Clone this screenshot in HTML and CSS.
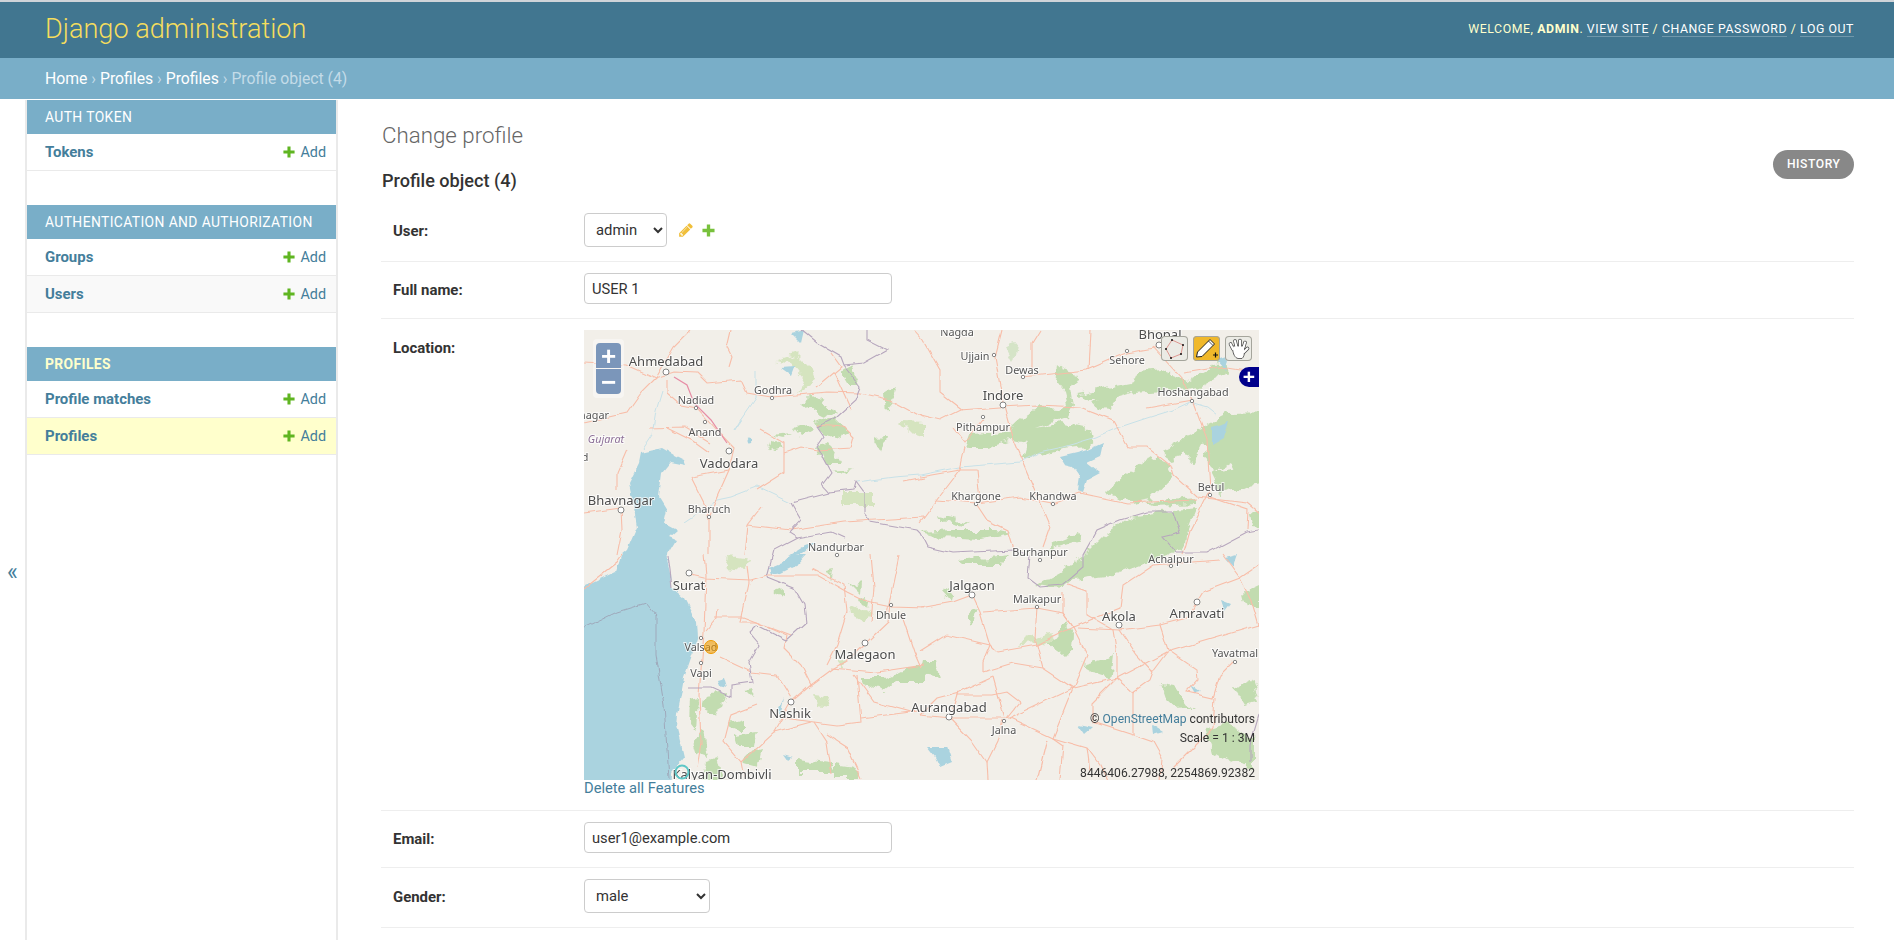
FILE: index.html
```html
<!DOCTYPE html>
<html lang="en">
<head>
    <meta charset="UTF-8">
    <title>Change profile | Django site admin</title>
    <link rel="stylesheet" href="styles.css">
</head>
<body>
    <svg class="defs" width="0" height="0">
        <symbol id="plus" viewBox="0 0 14 14"><path d="M5.2 0.5h3.6v4.7h4.7v3.6h-4.7v4.7h-3.6v-4.7h-4.7v-3.6h4.7z"/></symbol>
        <symbol id="pencil" viewBox="0 0 1792 1792"><path d="M491 1536l91-91-235-235-91 91v107h128v128h107zm523-928q0-22-22-22-10 0-17 7l-542 542q-7 7-7 17 0 22 22 22 10 0 17-7l542-542q7-7 7-17zm-54-192l416 416-832 832h-416v-416zm683 96q0 53-37 90l-166 166-416-416 166-165q36-38 90-38 53 0 91 38l235 234q37 39 37 91z"/></symbol>
    </svg>

    <header class="site-header">
        <div class="site-name">Django administration</div>
        <div class="user-tools">
            Welcome, <strong>admin</strong>.
            <a href="#">View site</a> /
            <a href="#">Change password</a> /
            <a href="#">Log out</a>
        </div>
    </header>
    <nav class="breadcrumbs">
        <a href="#">Home</a> <span class="sep">›</span>
        <a href="#">Profiles</a> <span class="sep">›</span>
        <a href="#">Profiles</a> <span class="sep">›</span>
        Profile object (4)
    </nav>

    <div class="main">
        <button class="nav-toggle">«</button>
        <aside class="sidebar">
            <section class="app">
                <h3 class="app-caption">Auth Token</h3>
                <div class="app-row">
                    <a class="model" href="#">Tokens</a>
                    <a class="add-link" href="#"><svg class="icon-add"><use href="#plus"/></svg>Add</a>
                </div>
            </section>
            <section class="app">
                <h3 class="app-caption">Authentication and Authorization</h3>
                <div class="app-row">
                    <a class="model" href="#">Groups</a>
                    <a class="add-link" href="#"><svg class="icon-add"><use href="#plus"/></svg>Add</a>
                </div>
                <div class="app-row alt">
                    <a class="model" href="#">Users</a>
                    <a class="add-link" href="#"><svg class="icon-add"><use href="#plus"/></svg>Add</a>
                </div>
            </section>
            <section class="app">
                <h3 class="app-caption current">Profiles</h3>
                <div class="app-row">
                    <a class="model" href="#">Profile matches</a>
                    <a class="add-link" href="#"><svg class="icon-add"><use href="#plus"/></svg>Add</a>
                </div>
                <div class="app-row selected">
                    <a class="model" href="#">Profiles</a>
                    <a class="add-link" href="#"><svg class="icon-add"><use href="#plus"/></svg>Add</a>
                </div>
            </section>
        </aside>

        <main class="content">
            <div class="content-head">
                <div>
                    <h1>Change profile</h1>
                    <h2>Profile object (4)</h2>
                </div>
                <a class="history" href="#">History</a>
            </div>

            <div class="form-row">
                <label>User:</label>
                <select class="field-select user"><option>admin</option></select>
                <a class="related" href="#"><svg class="icon-edit"><use href="#pencil"/></svg></a>
                <a class="related" href="#"><svg class="icon-related-add"><use href="#plus"/></svg></a>
            </div>
            <div class="form-row">
                <label>Full name:</label>
                <input class="field-text" type="text" value="USER 1">
            </div>
            <div class="form-row top">
                <label class="label-top">Location:</label>
                <div>
                    <div class="map">
                        <svg class="map-tiles" viewBox="0 0 675 450" width="675" height="450">
                            <defs>
                                <filter id="rough-land" filterUnits="userSpaceOnUse" x="-20" y="-20" width="715" height="490" color-interpolation-filters="sRGB">
                                    <feTurbulence type="fractalNoise" baseFrequency="0.08" numOctaves="3" seed="4"/>
                                    <feDisplacementMap in="SourceGraphic" scale="12" xChannelSelector="R" yChannelSelector="G"/>
                                    <feGaussianBlur stdDeviation="0.6"/>
                                </filter>
                                <filter id="rough-coast" filterUnits="userSpaceOnUse" x="-20" y="-20" width="715" height="490" color-interpolation-filters="sRGB">
                                    <feTurbulence type="fractalNoise" baseFrequency="0.1" numOctaves="2" seed="9"/>
                                    <feDisplacementMap in="SourceGraphic" scale="5" xChannelSelector="R" yChannelSelector="G"/>
                                    <feGaussianBlur stdDeviation="0.35"/>
                                </filter>
                                <filter id="rough-road" filterUnits="userSpaceOnUse" x="-20" y="-20" width="715" height="490" color-interpolation-filters="sRGB">
                                    <feTurbulence type="fractalNoise" baseFrequency="0.06" numOctaves="2" seed="2"/>
                                    <feDisplacementMap in="SourceGraphic" scale="5" xChannelSelector="R" yChannelSelector="G"/>
                                    <feGaussianBlur stdDeviation="0.3"/>
                                </filter>
                            </defs>
                            <rect width="675" height="450" fill="#f2efe9"/>

                            <!-- sea -->
                            <g filter="url(#rough-coast)">
                                <path class="sea" d="M-15 264L32 242 37 225 43 220 53 197 50 177 45 153 55 133 57 123 70 120 78 118 90 125 100 130 102 135 87 132 78 143 75 167 83 180 80 193 93 200 85 207 92 210 83 225 87 242 88 258 100 268 112 292 113 308 107 328 100 348 97 365 93 385 92 395 97 415 100 428 88 442 87 465 -15 465z"/>
                                <path class="sea-line" d="M0 298L33 282 62 273 72 285 72 325 80 375 85 448"/>
                            </g>

                            <!-- forest -->
                            <g class="forest" filter="url(#rough-land)">
                                <path d="M381 118L386 105 426 103 431 93 443 83 456 77 478 78 484 75 481 63 471 50 473 35 479 40 494 45 486 58 489 75 483 87 468 92 451 98 476 93 499 98 513 108 503 117 476 120 456 127 439 127 443 113 428 110 403 118z"/>
                                <path d="M493 63L523 58 549 53 553 43 576 40 603 50 636 33 643 43 616 57 596 60 549 63 526 70 503 70z"/>
                                <path d="M506 72L526 68 529 80 513 78z"/>
                                <path d="M521 162L539 147 569 127 584 135 588 147 566 170 549 173 523 165z"/>
                                <path d="M576 122L603 107 623 93 643 83 695 82 695 133 653 147 646 133 629 143 626 133 619 113 609 133 599 120 589 133z"/>
                                <path d="M453 255L480 240 500 225 520 205 546 187 590 180 612 178 604 198 602 215 565 232 530 245 490 250 470 258z"/>
                                <path d="M626 143L695 133 695 150 636 163z"/>
                                <path d="M560 172L612 168 612 174 570 176z"/>
                                <path d="M353 185L386 192 379 195 356 190z"/>
                                <path d="M336 202L369 200 413 200 426 203 396 210 356 208z"/>
                                <path d="M469 213L493 203 496 210 463 220z"/>
                                <path d="M373 230L426 225 416 235 379 235z"/>
                                <path d="M664 183L695 186 695 198 666 196z"/>
                                <path d="M499 335L523 328 529 325 526 348 516 345z"/>
                                <path d="M578 353L589 355 603 375 611 380 596 380 583 368z"/>
                                <path d="M623 398L643 392 669 408 669 438 646 432 629 422z"/>
                                <path d="M338 333L353 333 356 345 336 342z"/>
                                <path d="M217 73L227 65 252 80 240 88 230 83z"/>
                                <path d="M210 98L223 93 230 100 217 107z"/>
                                <path d="M230 93L250 87 267 103 253 110 237 103z"/>
                                <path d="M188 105L210 103 200 108z"/>
                                <path d="M180 117L190 110 200 118 190 120z"/>
                                <path d="M233 117L243 113 257 133 240 133z"/>
                                <path d="M257 43L267 37 275 53 263 53z"/>
                                <path d="M300 63L313 55 308 73 302 80z"/>
                                <path d="M290 108L302 107 298 122z"/>
                                <path d="M247 142L270 140 260 144z"/>
                                <path d="M120 365L143 362 133 385 117 378z"/>
                                <path d="M106 370L114 368 112 400 105 392z"/>
                                <path d="M108 410L120 402 124 428 112 424z"/>
                                <path d="M122 432L133 428 140 455 115 455z"/>
                                <path d="M147 392L160 388 160 402 150 398z"/>
                                <path d="M150 405L173 402 170 415 153 415z"/>
                                <path d="M165 420L178 418 174 436 160 432z"/>
                                <path d="M213 428L243 432 253 442 213 442z"/>
                                <path d="M250 435L270 438 277 448 250 448z"/>
                                <path d="M277 348L300 348 320 338 340 338 340 352 313 352 300 362 280 355z"/>
                                <path d="M190 262L200 258 200 267z"/>
                                <path d="M267 255L278 252 277 265z"/>
                                <path d="M243 240L250 238 248 248z"/>
                                <path d="M276 270L284 268 282 280z"/>
                                <path d="M160 360L170 358 168 368z"/>
                                <path d="M464 315L483 292 489 302 488 322 476 323z"/>
                                <path d="M358 262L368 258 366 272z"/>
                                <path d="M382 285L394 278 388 295z"/>
                                <path d="M650 358L668 350 675 372 660 375z"/>
                                <path d="M660 262L675 255 675 280 664 278z"/>
                                <path d="M420 15L432 12 428 30z" opacity=".6"/>
                            </g>
                            <g class="scrub" filter="url(#rough-land)">
                                <path d="M193 30L213 23 227 37 232 50 213 62 220 48 207 33z"/>
                                <path d="M257 162H289V175H257z"/>
                                <path d="M317 92L340 93 340 107 328 103z"/>
                                <path d="M434 315L449 307 463 302 470 308 464 315 451 313z"/>
                                <path d="M265 275L287 285 280 292 267 285z"/>
                                <path d="M230 365L248 367 245 378 232 376z"/>
                                <path d="M145 225L165 228 160 240 140 238z"/>
                                <path d="M252 332L262 330 258 340z"/>
                            </g>

                            <!-- water -->
                            <g class="lake" filter="url(#rough-coast)">
                                <path d="M476 127L493 123 503 120 519 113 516 127 503 133 516 143 503 150 499 162 494 160 496 147 489 137 481 135z"/>
                                <path d="M185 238L200 232 208 225 222 225 213 235 197 243 187 245z"/>
                                <path d="M205 226L222 215 232 212 218 224z"/>
                                <path d="M207 3L220 0 217 13z"/>
                                <path d="M197 38L210 37 207 45z"/>
                                <path d="M494 395L509 398 501 405z"/>
                                <path d="M568 395L579 402 569 405z"/>
                                <path d="M343 417L363 417 368 432 356 437 351 427z"/>
                                <path d="M641 228L653 225 649 237z"/>
                                <path d="M606 355L616 362 611 363z"/>
                                <path d="M628 97L645 92 640 108 628 115z"/>
                                <path d="M633 30L645 26 642 40z"/>
                                <path d="M133 350L140 348 143 358 135 356z"/>
                                <path d="M194 380L200 368 196 388z"/>
                                <circle cx="165" cy="111" r="2.500"/>
                                <path d="M198 425L208 428 203 432z"/>
                                <path d="M636 270L646 274 640 282z"/>
                            </g>
                            <g class="river" filter="url(#rough-road)">
                                <path d="M273 152L310 147 336 145 376 137 436 132 456 122 479 117 513 107 533 98 563 88 589 80 606 72 623 77 633 85"/>
                                <path d="M207 173L173 157 147 167 133 170 100 192"/>
                                <path d="M157 88L150 100 172 68 172 40"/>
                                <path d="M58 120L68 105 72 80 78 60"/>
                            </g>

                            <!-- roads -->
                            <g class="road" filter="url(#rough-road)">
                                <path d="M0 33L43 35 72 48 90 42 113 43 123 53 157 50 163 63 187 67 213 65 243 62 277 63 307 70 340 88"/>
                                <path d="M72 48L90 17 107 0"/>
                                <path d="M147 0L143 17 148 27 145 37"/>
                                <path d="M72 48L57 63 43 83 0 93"/>
                                <path d="M83 50L83 63 97 75 113 78 133 100 150 118 145 140 133 167 125 187 125 225"/>
                                <path d="M65 98L100 97 127 113"/>
                                <path d="M83 98L107 110 125 123"/>
                                <path d="M177 100L200 113 200 143 173 160"/>
                                <path d="M200 123L217 117 233 120 267 118 270 107 260 97 233 95"/>
                                <path d="M43 120L33 143 33 160"/>
                                <path d="M107 147L120 173 125 187"/>
                                <path d="M145 140L108 147"/>
                                <path d="M163 195L207 200 260 192 340 187"/>
                                <path d="M163 195L160 225"/>
                                <path d="M177 177L163 195"/>
                                <path d="M233 57L257 37 247 23"/>
                                <path d="M250 43L267 80"/>
                                <path d="M320 152L340 148"/>
                                <path d="M330 0L339 10"/>
                                <path d="M37 177L38 200 33 225"/>
                                <path d="M0 183L37 178"/>
                                <path d="M336 85L356 90 376 80 416 77 453 75 496 77 529 90 544 117 563 117 586 135 589 145 613 167 663 173 675 183"/>
                                <path d="M339 10L356 40 356 63 378 80"/>
                                <path d="M418 0L411 27 419 73 429 110 446 150 466 197 459 217"/>
                                <path d="M456 0L448 13 448 43"/>
                                <path d="M439 47L476 43 503 40 526 30 543 23 576 17"/>
                                <path d="M506 0L504 40"/>
                                <path d="M569 17L599 50 609 72 623 110 626 160 606 200 599 225"/>
                                <path d="M563 78L609 70"/>
                                <path d="M599 43L636 37 675 43"/>
                                <path d="M381 117L376 140 353 170 336 193"/>
                                <path d="M369 97L381 112 399 90"/>
                                <path d="M336 147L376 140 393 140 396 170 393 175"/>
                                <path d="M353 170L393 173 436 167 469 173 496 163 543 173 613 170"/>
                                <path d="M393 175L403 190 423 200 429 220"/>
                                <path d="M626 167L664 180 663 200"/>
                                <path d="M120 225L122 245 120 302 115 365 117 412 113 438"/>
                                <path d="M107 245L120 248 167 250 183 245 233 245 263 262 283 272 307 277 340 278"/>
                                <path d="M163 235L165 252 157 292 173 292 203 305 200 318 217 335 227 355 207 372 190 402 157 432"/>
                                <path d="M133 278L132 288 122 300"/>
                                <path d="M130 287L160 287 207 305"/>
                                <path d="M137 328L167 342 193 345 207 368"/>
                                <path d="M227 355L250 338 267 328 305 292 307 275"/>
                                <path d="M227 238L260 255 263 282 253 315 243 335"/>
                                <path d="M273 345L277 392 253 395 230 392 200 388"/>
                                <path d="M247 338L293 342 340 335"/>
                                <path d="M277 388L327 382 340 380"/>
                                <path d="M270 345L290 372 327 382"/>
                                <path d="M230 392L243 412 248 445"/>
                                <path d="M173 375L147 385 140 412 157 432 160 448"/>
                                <path d="M190 402L227 392"/>
                                <path d="M0 258L33 232 38 225"/>
                                <path d="M317 283L330 322 337 338"/>
                                <path d="M287 225L290 258 287 292"/>
                                <path d="M315 225L308 258 303 285"/>
                                <path d="M243 405L263 418 277 448"/>
                                <path d="M336 278L369 272 388 265 396 282 406 315 399 332 399 342"/>
                                <path d="M406 315L413 322 453 315 489 297 536 278 539 255 569 235 636 230"/>
                                <path d="M453 277L451 308 459 338 489 358 426 388"/>
                                <path d="M399 282L453 278 479 283 489 297"/>
                                <path d="M483 255L503 262 503 285 529 300 533 325 533 348 549 362 549 405"/>
                                <path d="M479 262L479 283 489 297 503 325 489 358 469 408 479 415"/>
                                <path d="M489 358L533 348 583 322 675 295"/>
                                <path d="M493 298L536 300 576 295 603 288"/>
                                <path d="M576 295L584 320 613 340 614 350 603 362 629 368 636 345 649 332"/>
                                <path d="M536 300L553 325 569 342 566 350 549 362"/>
                                <path d="M583 322L568 342"/>
                                <path d="M533 348L509 372 509 392 549 405 569 412 578 428 576 450"/>
                                <path d="M426 388L469 408 503 418 516 435 523 450"/>
                                <path d="M336 385L366 388 419 388 426 388"/>
                                <path d="M366 388L389 412 403 432 413 412 419 390"/>
                                <path d="M373 365L409 365 423 362 436 372 423 388"/>
                                <path d="M399 342L429 333 459 338"/>
                                <path d="M409 347L416 372 421 388"/>
                                <path d="M336 322L363 305 406 315"/>
                                <path d="M479 415L476 450"/>
                                <path d="M503 418L506 442"/>
                                <path d="M463 410L453 450"/>
                                <path d="M631 368L629 398 589 438"/>
                                <path d="M675 235L656 248 619 262 603 288"/>
                                <path d="M639 225L656 248 669 275 675 295"/>
                                <path d="M336 385L353 368 376 362 409 347"/>
                                <path d="M375 362L369 382"/>
                                <path d="M403 432L404 450"/>
                            </g>
                            <path class="motorway" d="M90 47L103 55 110 73 127 90 143 113"/>

                            <!-- state borders -->
                            <g class="state-line" filter="url(#rough-road)">
                                <path d="M217 0L233 13 257 27 260 35 280 33 303 20 283 10 283 0"/>
                                <path d="M260 35L277 57 272 70 253 87 233 97 240 107 233 117 247 143 238 155 245 163 207 173"/>
                                <path d="M245 163L270 160 272 152 280 163 280 183 287 192 333 200"/>
                                <path d="M207 173L217 190 205 203 213 208 247 202 260 208"/>
                                <path d="M213 208L190 220 183 247"/>
                                <path d="M183 247L210 258 220 275 222 292 202 310 173 295 165 303 175 315 165 332 168 352 147 355 147 367 127 358 103 358"/>
                                <path d="M333 200L336 203 343 217 369 223 429 220 446 225 444 248 456 257 479 255 499 238 499 225 513 200 536 190 563 182 589 182 596 203 579 207 593 223 623 223 663 202 675 200"/>
                                <path d="M675 385L666 415 666 432"/>
                                <path d="M84 225L86 240 88 258"/>
                            </g>

                            <!-- towns -->
                            <g class="town">
                                <circle cx="188" cy="68" r="1.7"/><circle cx="112" cy="78" r="1.7"/><circle cx="121" cy="92" r="1.7"/>
                                <circle cx="125" cy="187" r="1.7"/><circle cx="253" cy="225" r="1.7"/><circle cx="410" cy="25" r="1.7"/>
                                <circle cx="439" cy="47" r="1.7"/><circle cx="399" cy="87" r="1.7"/><circle cx="543" cy="21" r="1.7"/>
                                <circle cx="608" cy="71" r="1.7"/><circle cx="392" cy="174" r="1.7"/><circle cx="469" cy="174" r="1.7"/>
                                <circle cx="626" cy="165" r="1.7"/><circle cx="456" cy="230" r="1.7"/><circle cx="117" cy="308" r="1.7"/>
                                <circle cx="117" cy="333" r="1.7"/><circle cx="307" cy="275" r="1.7"/><circle cx="420" cy="391" r="1.7"/>
                                <circle cx="453" cy="277" r="1.7"/><circle cx="587" cy="236" r="1.7"/><circle cx="651" cy="332" r="1.7"/>
                                <circle cx="82" cy="42" r="3"/><circle cx="145" cy="121" r="3"/><circle cx="37" cy="180" r="3"/>
                                <circle cx="419" cy="75" r="3"/><circle cx="575" cy="15" r="3"/><circle cx="105" cy="243" r="3"/>
                                <circle cx="281" cy="313" r="3"/><circle cx="207" cy="372" r="3"/><circle cx="365" cy="387" r="3"/>
                                <circle cx="388" cy="265" r="3"/><circle cx="535" cy="295" r="3"/><circle cx="613" cy="272" r="3"/>
                            </g>

                            <!-- place names -->
                            <g class="place">
                                <text x="189" y="64">Godhra</text><text x="112" y="74">Nadiad</text><text x="121" y="106">Anand</text>
                                <text x="125" y="183">Bharuch</text><text x="252" y="221">Nandurbar</text><text x="373" y="6">Nagda</text>
                                <text x="391" y="30">Ujjain</text><text x="438" y="44">Dewas</text><text x="399" y="101">Pithampur</text>
                                <text x="543" y="34">Sehore</text><text x="609" y="66">Hoshangabad</text><text x="392" y="170">Khargone</text>
                                <text x="469" y="170">Khandwa</text><text x="627" y="161">Betul</text><text x="456" y="226">Burhanpur</text>
                                <text x="117" y="321">Valsad</text><text x="117" y="347">Vapi</text><text x="307" y="289">Dhule</text>
                                <text x="453" y="273">Malkapur</text><text x="587" y="233">Achalpur</text><text x="651" y="327">Yavatmal</text>
                                <text x="420" y="404">Jalna</text><text x="10" y="89">nagar</text><text x="1" y="131">d</text>
                                <text class="big" x="82" y="36">Ahmedabad</text><text class="big" x="145" y="138">Vadodara</text>
                                <text class="big" x="37" y="175">Bhavnagar</text><text class="big" x="419" y="70">Indore</text>
                                <text class="big" x="576" y="9">Bhopal</text><text class="big" x="105" y="260">Surat</text>
                                <text class="big" x="281" y="329">Malegaon</text><text class="big" x="206" y="388">Nashik</text>
                                <text class="big" x="365" y="382">Aurangabad</text><text class="big" x="388" y="260">Jalgaon</text>
                                <text class="big" x="535" y="291">Akola</text><text class="big" x="613" y="288">Amravati</text>
                                <text class="big" x="138" y="449">Kalyan-Dombivli</text>
                                <text class="region" x="22" y="113">Gujarat</text>
                            </g>

                            <circle class="marker-orange" cx="127" cy="317" r="6.500"/>
                            <circle class="marker-teal" cx="98" cy="442" r="6.500"/>
                        </svg>

                        <div class="zoom-box">
                            <button class="zoom-btn">+</button>
                            <button class="zoom-btn">−</button>
                        </div>

                        <div class="draw-tools">
                            <div class="draw-btn">
                                <svg viewBox="0 0 27 25" width="27" height="25">
                                    <path d="M5 13L11 4 22 9 20 18 10 22z" fill="none" stroke="#d9736c" stroke-width=".7"/>
                                    <g fill="#111"><circle cx="5" cy="13" r="1"/><circle cx="11" cy="4" r="1"/><circle cx="22" cy="9" r="1"/><circle cx="20" cy="18" r="1"/><circle cx="10" cy="22" r="1"/></g>
                                </svg>
                            </div>
                            <div class="draw-btn active">
                                <svg viewBox="0 0 27 25" width="27" height="25">
                                    <path d="M3.500 21L4.500 16 17 3.500 21.500 8 9 20.500z" fill="#fff" stroke="#222" stroke-width="1"/>
                                    <path d="M15.500 5L20 9.500" stroke="#222" stroke-width=".8"/>
                                    <path d="M20 19h5M22.500 16.500v5" stroke="#111" stroke-width="1.200"/>
                                </svg>
                            </div>
                            <div class="draw-btn">
                                <svg viewBox="0 0 27 25" width="27" height="25">
                                    <g fill="none" stroke="#444" stroke-width="3.600" stroke-linecap="round"><path d="M8 13L5.500 8M11.500 11L10 5M15 10.500V4.500M18.500 11.500L20 6.500M19 16L22.500 12.500"/><path d="M10 17h8"/></g>
                                    <path d="M7.500 12.500C8 18 10 22 13 22.500H17C19 21 19.500 18 19.500 14.500V10H8z" fill="#fff" stroke="#444" stroke-width=".8"/>
                                    <g fill="none" stroke="#fff" stroke-width="2.200" stroke-linecap="round"><path d="M8 13L5.500 8M11.500 11L10 5M15 10.500V4.500M18.500 11.500L20 6.500M19 16L22.500 12.500"/></g>
                                </svg>
                            </div>
                        </div>

                        <div class="layer-switch">+</div>

                        <div class="attribution">© <span class="osm">OpenStreetMap</span> contributors</div>
                        <div class="scale">Scale = 1 : 3M</div>
                        <div class="mouse-pos">8446406.27988, 2254869.92382</div>
                    </div>
                    <a class="delete-features" href="#">Delete all Features</a>
                </div>
            </div>
            <div class="form-row">
                <label>Email:</label>
                <input class="field-text" type="text" value="user1@example.com">
            </div>
            <div class="form-row">
                <label>Gender:</label>
                <select class="field-select gender"><option>male</option></select>
            </div>
        </main>
    </div>
</body>
</html>
```

FILE: styles.css
```css
html, body {
    height: 100%;
    margin: 0;
}
body {
    display: flex;
    flex-direction: column;
    font-family: Roboto, "Liberation Sans", sans-serif;
    font-size: 16px;
    color: #333;
    background: #fff;
    overflow: hidden;
    border-top: 2px solid #cfd4d9;
    box-sizing: border-box;
}
a {
    color: #447e9b;
    text-decoration: none;
}
.defs {
    position: absolute;
}

/* header */
.site-header {
    display: flex;
    justify-content: space-between;
    align-items: center;
    height: 54px;
    padding: 0 40px 2px 45px;
    background: #417690;
    color: #ffc;
    flex-shrink: 0;
}
.site-name {
    font-size: 27.1px;
    font-weight: 300;
    color: #f5dd5d;
}
.user-tools {
    font-size: 12.3px;
    font-weight: 400;
    letter-spacing: 0.575px;
    text-transform: uppercase;
}
.user-tools strong {
    font-weight: 700;
}
.user-tools a {
    color: #fff;
    border-bottom: 1px solid rgba(255, 255, 255, 0.25);
}
.breadcrumbs {
    height: 41px;
    line-height: 41px;
    padding: 0 45px;
    background: #79aec8;
    color: #c4dce8;
    font-size: 15.75px;
    font-weight: 400;
    flex-shrink: 0;
}
.breadcrumbs a {
    color: #fff;
}

/* layout */
.main {
    display: flex;
    flex: 1;
    min-height: 0;
    padding-top: 1px;
}
.nav-toggle {
    width: 25px;
    border: none;
    border-right: 2px solid #eaeaea;
    box-sizing: content-box;
    padding: 104px 0 0;
    background: #fff;
    color: #447e9b;
    font-family: Roboto, sans-serif;
    font-size: 23px;
    line-height: 1;
}
.sidebar {
    width: 309px;
    flex-shrink: 0;
    border-right: 2px solid #eaeaea;
}
.app {
    margin-bottom: 34px;
}
.app-caption {
    margin: 0;
    height: 34px;
    line-height: 35px;
    padding-left: 18px;
    background: #79aec8;
    color: #fff;
    font-size: 13.85px;
    font-weight: 400;
    letter-spacing: 0.4px;
    text-transform: uppercase;
    overflow: hidden;
}
.app-caption.current {
    color: #ffc;
    font-weight: 700;
}
.app-row {
    display: flex;
    justify-content: space-between;
    align-items: center;
    height: 36px;
    padding: 0 10px 0 18px;
    border-bottom: 1px solid #eaeaea;
    font-size: 14.95px;
}
.app-row.alt {
    background: #f9f9f9;
}
.app-row.selected {
    background: #ffc;
}
.model {
    font-weight: 700;
}
.add-link {
    display: flex;
    align-items: center;
    font-size: 14.4px;
}
.icon-add, .icon-related-add {
    width: 12px;
    height: 12px;
    margin-right: 5px;
    fill: #5fb521;
}

/* content */
.content {
    flex: 1;
    padding: 0 40px 0 43px;
    min-width: 0;
}
.content-head {
    display: flex;
    justify-content: space-between;
    align-items: flex-start;
    height: 102px;
}
h1 {
    margin: 21px 0 0 1px;
    font-size: 22.3px;
    line-height: 28px;
    font-weight: 300;
    color: #666;
}
h2 {
    margin: 21px 0 0 1px;
    font-size: 18.1px;
    line-height: 22px;
    font-weight: 500;
    color: #333;
}
.history {
    margin-top: 50px;
    height: 29px;
    line-height: 29px;
    padding: 0 13.5px;
    border-radius: 15px;
    background: #888;
    color: #fff;
    font-size: 12.1px;
    font-weight: 500;
    letter-spacing: 0.575px;
    text-transform: uppercase;
}
.form-row {
    display: flex;
    align-items: center;
    padding: 11px 10px 14px 12px;
    border-bottom: 1px solid #eee;
}
.form-row.top {
    align-items: flex-start;
}
.form-row label {
    width: 191px;
    flex-shrink: 0;
    padding-top: 2px;
    font-size: 14.95px;
    font-weight: 700;
    color: #333;
}
.form-row .label-top {
    padding-top: 9px;
    line-height: 18px;
}
.field-select {
    height: 34px;
    padding: 0 6px 0 7px;
    border: 1px solid #ccc;
    border-radius: 4px;
    background: #fff;
    color: #333;
    font-family: Roboto, sans-serif;
    font-size: 14.8px;
}
.field-select.user {
    width: 83px;
}
.field-select.gender {
    width: 126px;
}
.field-text {
    width: 308px;
    height: 31px;
    box-sizing: border-box;
    padding: 0 7px;
    border: 1px solid #ccc;
    border-radius: 4px;
    color: #333;
    font-family: Roboto, sans-serif;
    font-size: 14.7px;
}
.related {
    display: flex;
    margin-left: 11px;
}
.related + .related {
    margin-left: 8px;
}
.icon-edit {
    width: 16px;
    height: 16px;
    fill: #f0bf3a;
}
.icon-related-add {
    width: 13px;
    height: 13px;
    margin: 0;
    fill: #78c13c;
}

/* map */
.map {
    position: relative;
    width: 675px;
    height: 450px;
    overflow: hidden;
}
.map-tiles {
    display: block;
}
.sea {
    fill: #aad3df;
}
.sea-line {
    fill: none;
    stroke: #9fa9bb;
    stroke-width: 1;
}
.forest {
    fill: #c2dcb0;
}
.scrub {
    fill: #d5e4bf;
}
.lake {
    fill: #aad3df;
}
.river {
    fill: none;
    stroke: #c7e1e8;
    stroke-width: 1;
}
.road {
    fill: none;
    stroke: #f8bda8;
    stroke-width: 1.1;
}
.motorway {
    fill: none;
    stroke: #e78da5;
    stroke-width: 1.2;
}
.state-line {
    fill: none;
    stroke: #b6a6bd;
    stroke-width: 1.1;
}
.town {
    fill: #fff;
    stroke: #777;
    stroke-width: 0.9;
}
.place text {
    font-family: "Noto Sans", sans-serif;
    font-size: 10.8px;
    fill: #555;
    stroke: rgba(255, 255, 255, 0.75);
    stroke-width: 2px;
    paint-order: stroke;
    text-anchor: middle;
}
.place .big {
    font-size: 13px;
    fill: #4c4c4c;
}
.place .region {
    fill: #8c6f96;
    font-style: italic;
}
.marker-orange {
    fill: rgba(238, 153, 0, 0.6);
    stroke: #ee9900;
    stroke-width: 1;
}
.marker-teal {
    fill: none;
    stroke: #5fc7c7;
    stroke-width: 2;
}
.zoom-box {
    position: absolute;
    left: 9px;
    top: 9px;
    display: flex;
    flex-direction: column;
    gap: 1px;
    padding: 4px 3px;
    border-radius: 4px;
    background: rgba(255, 255, 255, 0.4);
}
.zoom-btn {
    width: 25px;
    height: 25px;
    padding: 0;
    border: none;
    background: #7b96ba;
    color: #fff;
    font-family: "Liberation Sans", sans-serif;
    font-size: 26px;
    font-weight: 700;
    line-height: 24px;
}
.zoom-btn:first-child {
    border-radius: 4px 4px 0 0;
}
.zoom-btn:last-child {
    border-radius: 0 0 4px 4px;
}
.draw-tools {
    position: absolute;
    left: 577px;
    top: 6px;
    display: flex;
    gap: 5px;
}
.draw-btn {
    width: 27px;
    height: 25px;
    border-radius: 4px;
    box-shadow: inset 0 0 0 1px #a5a59c;
    background: #ebebe5;
}
.draw-btn.active {
    background: #f0b82a;
}
.draw-btn svg {
    display: block;
}
.layer-switch {
    position: absolute;
    right: 0;
    top: 37px;
    width: 20px;
    height: 20px;
    border-radius: 10px 0 0 10px;
    background: #00008b;
    color: #fff;
    font-family: "Liberation Sans", sans-serif;
    font-size: 21px;
    font-weight: 700;
    line-height: 20px;
    text-align: center;
}
.attribution, .scale, .mouse-pos {
    position: absolute;
    right: 4px;
    color: #333;
    font-size: 12.1px;
    white-space: nowrap;
}
.attribution {
    bottom: 54px;
}
.osm {
    color: #447e9b;
}
.scale {
    bottom: 35px;
}
.mouse-pos {
    bottom: 0;
}
.delete-features {
    display: block;
    height: 16px;
    line-height: 16px;
    font-size: 14.7px;
}
```
